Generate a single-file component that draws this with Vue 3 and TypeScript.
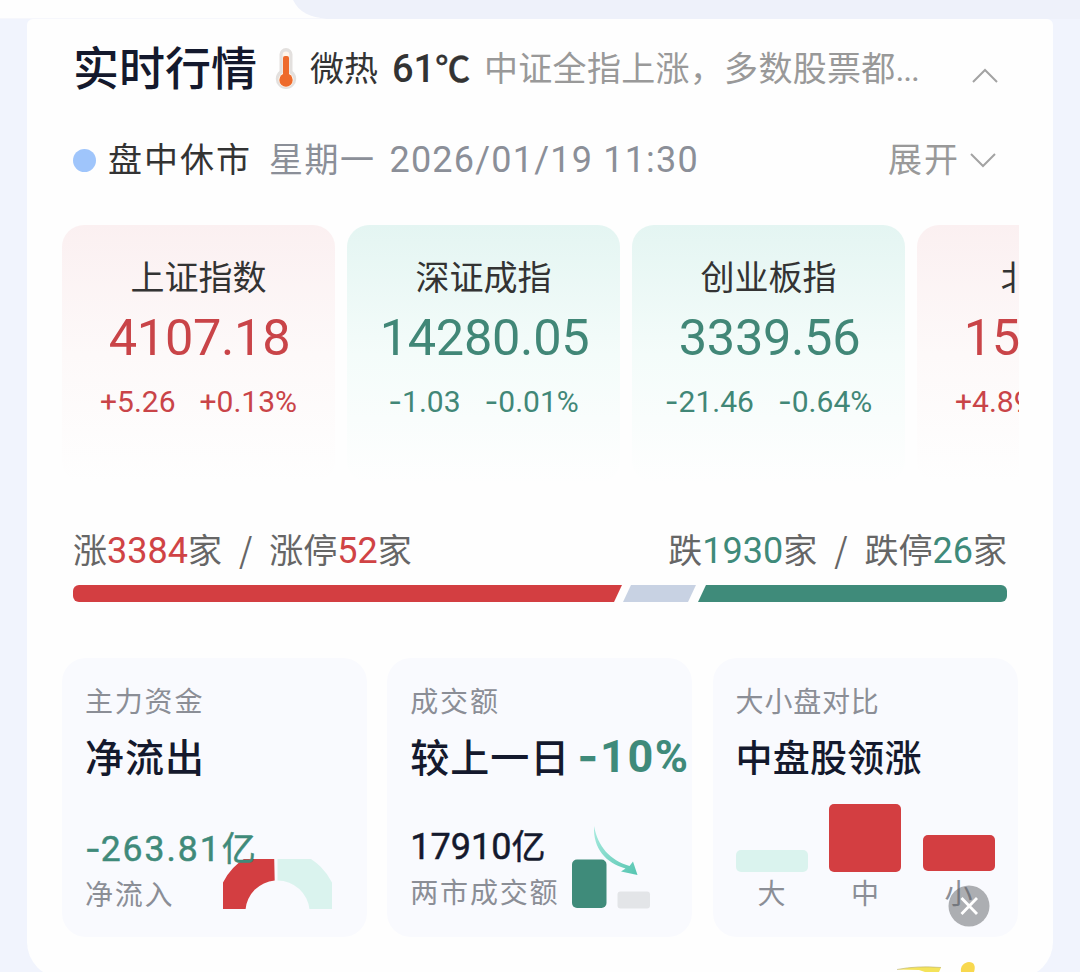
<script setup lang="ts">
type Trend = 'up' | 'down'

interface MarketIndex {
  name: string
  value: string
  sign: string
  change: string
  percent: string
  trend: Trend
}

const indices: MarketIndex[] = [
  { name: '上证指数', value: '4107.18', sign: '+', change: '5.26', percent: '0.13%', trend: 'up' },
  { name: '深证成指', value: '14280.05', sign: '-', change: '1.03', percent: '0.01%', trend: 'down' },
  { name: '创业板指', value: '3339.56', sign: '-', change: '21.46', percent: '0.64%', trend: 'down' },
  { name: '北证50', value: '1534.26', sign: '+', change: '4.89', percent: '0.32%', trend: 'up' },
]

const caps = [
  { label: '大', height: 22, lift: 0, tone: 'pale' },
  { label: '中', height: 68, lift: 0, tone: 'red' },
  { label: '小', height: 36, lift: 1, tone: 'red' },
]
</script>

<template>
  <div class="page">
    <svg class="tabs" width="1080" height="19" viewBox="0 0 1080 19">
      <rect width="1080" height="19" fill="#eef1fa" />
      <path d="M0 0H293C299 12 310 18 327 18.5H0Z" fill="#fefefe" />
    </svg>

    <main class="panel">
      <header class="headline">
        <h1>实时行情</h1>
        <svg class="thermo" width="22" height="44" viewBox="0 0 22 44">
          <path d="M4.500 7.500a6.500 6.500 0 0 1 13 0V24a10.200 10.200 0 1 1-13 0Z" fill="#e3e0de" />
          <path d="M7.600 8a3.400 3.400 0 0 1 6.800 0V26a7.500 7.500 0 1 1-6.800 0Z" fill="#fff5ea" />
          <circle cx="11" cy="33" r="6.700" fill="#ee6a2b" />
          <rect x="8" y="9" width="6" height="24" rx="2" fill="#ee6a2b" />
        </svg>
        <span class="mood">微热</span>
        <span class="temp"><span class="num">61</span>℃</span>
        <span class="summary">中证全指上涨，多数股票都<span class="dots">...</span></span>
        <svg class="chev" width="26" height="16" viewBox="0 0 26 16"><path d="M1 14 13 2 25 14" /></svg>
      </header>

      <div class="session">
        <i class="dot"></i>
        <span class="status">盘中休市</span>
        <span class="date">星期一</span>
        <span class="date stamp"><span class="num">2026/01/19 11:30</span></span>
        <span class="expand">展开</span>
        <svg class="chev" width="26" height="16" viewBox="0 0 26 16"><path d="M1 2 13 14 25 2" /></svg>
      </div>

      <section class="indices">
        <article v-for="item in indices" :key="item.name" class="index" :class="item.trend">
          <div class="name">{{ item.name }}</div>
          <div class="value">{{ item.value }}</div>
          <div class="change">
            <span><span class="sign">{{ item.sign }}</span>{{ item.change }}</span>
            <span><span class="sign">{{ item.sign }}</span>{{ item.percent }}</span>
          </div>
        </article>
      </section>

      <section class="breadth">
        <div class="counts">
          <div>涨<span class="num red">3384</span>家<span class="slash">/</span>涨停<span class="num red">52</span>家</div>
          <div>跌<span class="num green">1930</span>家<span class="slash">/</span>跌停<span class="num green">26</span>家</div>
        </div>
        <div class="ratio">
          <i class="rise"></i>
          <i class="flat"></i>
          <i class="fall"></i>
        </div>
      </section>

      <section class="metrics">
        <article class="metric">
          <div class="label">主力资金</div>
          <div class="title">净流出</div>
          <div class="flow">
            <div class="amount"><span class="sign">-</span><span class="num">263.81</span>亿</div>
            <div class="label">净流入</div>
          </div>
          <svg class="donut" width="109" height="50" viewBox="0 0 109 50">
            <path d="M-6.500 51A61 61 0 0 1 51 -10L51.700 21.500A32 32 0 0 0 22.500 51Z" fill="#d33e41" />
            <path d="M115.500 51A61 61 0 0 0 54.500 -10V21.500A32 32 0 0 1 86.500 51Z" fill="#daf3ee" />
          </svg>
        </article>

        <article class="metric">
          <div class="label">成交额</div>
          <div class="title">较上一日<span class="pct"><span class="sign">-</span>10%</span></div>
          <div class="turnover">
            <div>
              <div class="amount"><span class="num">17910</span>亿</div>
              <div class="label">两市成交额</div>
            </div>
            <svg width="80" height="84" viewBox="0 0 80 84">
              <defs>
                <linearGradient id="arrow" x1="0" y1="0" x2="1" y2="1">
                  <stop offset="0" stop-color="#a9ebdf" />
                  <stop offset="1" stop-color="#56c5b1" />
                </linearGradient>
              </defs>
              <rect x="0" y="34.500" width="34.500" height="48.500" rx="5" fill="#3f8b7a" />
              <rect x="45.500" y="66.500" width="32.500" height="17" rx="3" fill="#e3e5e8" />
              <path d="M22 1C26 22 38 35 57.500 41L61 36.500 65.500 50 49 46.500 53.500 43.500C34 38 21 24 22 1Z" fill="url(#arrow)" />
            </svg>
          </div>
        </article>

        <article class="metric">
          <div class="label tight">大小盘对比</div>
          <div class="title compact">中盘股领涨</div>
          <div class="caps">
            <div v-for="cap in caps" :key="cap.label" class="cap">
              <i :class="cap.tone" :style="{ height: cap.height + 'px', marginBottom: 4 + cap.lift + 'px' }"></i>
              <span>{{ cap.label }}</span>
            </div>
          </div>
        </article>
      </section>
    </main>

    <svg class="close" width="42" height="42" viewBox="0 0 42 42">
      <circle cx="21" cy="21" r="20.500" fill="#606166" fill-opacity=".5" />
      <path d="M13.500 13 29 29M29 13 13.500 29" stroke="#fff" stroke-width="2.800" />
    </svg>
    <svg class="promo" width="82" height="12" viewBox="0 0 82 12">
      <path d="M0 9.500Q20 5.500 44 7.500L42 12H28L22 10Z" fill="#f4e35a" />
      <path d="M0 9.500Q20 5.500 44 7.500" fill="none" stroke="#b9ae6a" stroke-width=".6" />
      <path d="M64 12C63 6 67 2.500 72 2C77 2 79 6 77 12Z" fill="#f8d84e" />
    </svg>
  </div>
</template>

<style>
body {
  background: #f1f4fd;
  overflow: hidden;
}
</style>

<style scoped>
.page {
  position: relative;
  width: 1080px;
  height: 972px;
  overflow: hidden;
  background: #f1f4fd;
  font-family: "Noto Sans CJK SC", "Noto Sans", sans-serif;
  color: #333;
}
.tabs {
  display: block;
}
.panel {
  box-sizing: border-box;
  width: 1026px;
  height: 959px;
  margin-left: 27px;
  padding: 17px 35px 0;
  border-radius: 6px 6px 36px 36px;
  background: #fefefe;
}
.num, .dots {
  font-family: Roboto, sans-serif;
  line-height: 0;
}
.sign {
  font-family: Inter, sans-serif;
  line-height: 0;
}
.red { color: #d04345; }
.green { color: #3f8a7a; }

.headline, .session {
  display: flex;
  align-items: center;
  white-space: nowrap;
  font-size: 34px;
}
.headline {
  height: 60px;
  padding-left: 11px;
}
h1 {
  margin: -2px 0 0;
  width: 184px;
  font-size: 46px;
  font-weight: 500;
  line-height: 60px;
  color: #14192d;
}
.thermo {
  margin: 6px 0 0 18px;
}
.mood, .temp, .summary {
  margin-top: 2px;
  line-height: 60px;
}
.mood {
  margin-left: 13px;
}
.temp {
  width: 92px;
  margin-left: 14px;
  font-size: 35px;
  font-weight: 500;
  -webkit-text-stroke: 0.400px #333;
}
.temp .num {
  font-size: 38px;
  -webkit-text-stroke: 0;
}
.summary {
  width: 440px;
  letter-spacing: 0.300px;
  color: #999;
}
.dots {
  letter-spacing: -1.300px;
}
.chev {
  fill: none;
  stroke: #a3a3a3;
  stroke-width: 2;
}
.headline .chev {
  margin: 19px 0 0 48px;
}
.session {
  height: 40px;
  margin-top: 42px;
  padding-left: 11px;
  line-height: 40px;
}
.dot {
  width: 23px;
  height: 23px;
  margin-top: 5px;
  border-radius: 50%;
  background: #9fc5fb;
}
.status {
  width: 161px;
  margin-left: 12px;
  letter-spacing: 2px;
}
.date {
  letter-spacing: 1.500px;
  color: #8b8f98;
}
.stamp {
  margin-left: 14px;
  letter-spacing: 1.200px;
}
.stamp .num {
  font-size: 36px;
}
.expand {
  margin-left: auto;
  letter-spacing: 2px;
  color: #999;
}
.session .chev {
  margin: 4px 22px 0 10px;
}

.indices {
  display: flex;
  gap: 12px;
  width: 957px;
  height: 258px;
  margin-top: 47px;
  overflow: hidden;
}
.index {
  box-sizing: border-box;
  flex: 0 0 273px;
  padding-top: 29px;
  border-radius: 22px;
  text-align: center;
  white-space: nowrap;
}
.index.up {
  color: #c94448;
  background: linear-gradient(#fbf0f1, #fdf9f9 50%, #fefefe);
}
.index.down {
  color: #418777;
  background: linear-gradient(#e4f5f2, #f4fcfa 50%, #fefefe);
}
.name {
  font-size: 34px;
  line-height: 44px;
  color: #333;
}
.value {
  margin-top: 10px;
  padding-left: 2px;
  font-family: Roboto, sans-serif;
  font-size: 50.500px;
  line-height: 60px;
  letter-spacing: -0.300px;
}
.change {
  display: flex;
  justify-content: center;
  gap: 24px;
  margin-top: 18px;
  font-family: Roboto, sans-serif;
  font-size: 30px;
  line-height: 32px;
}
.up .sign {
  font-family: Roboto, sans-serif;
}

.breadth {
  width: 934px;
  margin: 46px 0 0 11px;
}
.counts {
  display: flex;
  justify-content: space-between;
  height: 40px;
  font-size: 34px;
  line-height: 40px;
  white-space: nowrap;
  color: #666;
}
.counts .num {
  font-size: 36px;
}
.slash {
  margin: 0 17px;
}
.ratio {
  display: flex;
  height: 17px;
  margin-top: 16px;
}
.rise {
  width: 549px;
  border-radius: 6px 0 0 6px;
  background: #d33e41;
  clip-path: polygon(0 0, 100% 0, calc(100% - 8px) 100%, 0 100%);
}
.flat {
  width: 73px;
  margin-left: 1px;
  background: #c8d2e3;
  clip-path: polygon(8px 0, 100% 0, calc(100% - 8px) 100%, 0 100%);
}
.fall {
  flex: 1;
  margin-left: 2px;
  border-radius: 0 6px 6px 0;
  background: #3f8b7a;
  clip-path: polygon(8px 0, 100% 0, 100% 100%, 0 100%);
}

.metrics {
  display: grid;
  grid-template-columns: repeat(3, 305px);
  gap: 20.300px;
  margin-top: 56px;
}
.metric {
  position: relative;
  box-sizing: border-box;
  height: 279px;
  padding: 26px 0 0 23px;
  border-radius: 24px;
  background: #f9fafe;
  white-space: nowrap;
}
.label {
  font-size: 28px;
  line-height: 32px;
  letter-spacing: 1.800px;
  color: #8b8e96;
}
.label.tight {
  letter-spacing: 0.800px;
}
.title {
  height: 50px;
  margin-top: 14px;
  font-size: 39px;
  font-weight: 500;
  line-height: 50px;
  letter-spacing: 1px;
  color: #14192d;
}
.title.compact {
  padding-top: 1px;
  height: 49px;
  font-size: 37px;
  letter-spacing: 0.200px;
}
.pct {
  margin-left: 7px;
  font-family: Roboto, sans-serif;
  font-size: 45px;
  font-weight: 700;
  line-height: 0;
  letter-spacing: 1.600px;
  color: #3f8a7a;
}
.amount {
  font-size: 34px;
  line-height: 40px;
  color: #14192d;
  -webkit-text-stroke: 0.500px currentColor;
}
.amount .num {
  font-size: 36px;
}
.flow {
  position: relative;
  z-index: 1;
  margin-top: 47px;
}
.flow .amount {
  color: #3f8a7a;
}
.flow .num {
  font-size: 35.500px;
  letter-spacing: 2px;
}
.flow .label {
  margin-top: 10px;
}
.label {
  -webkit-text-stroke: 0;
}
.donut {
  position: absolute;
  left: 161px;
  top: 201px;
}
.turnover {
  display: flex;
  gap: 13px;
  margin-top: 45px;
}
.turnover .label {
  margin-top: 10px;
}
.caps {
  display: flex;
  gap: 21.500px;
  align-items: flex-end;
  height: 128px;
}
.cap {
  display: flex;
  flex-direction: column;
  align-items: center;
  width: 72px;
  font-size: 28px;
  line-height: 32px;
  color: #8b8e96;
}
.cap i {
  width: 72px;
  border-radius: 5px;
}
.cap .red { background: #d33e41; }
.cap .pale { background: #daf3ee; }

.close {
  position: absolute;
  left: 947.500px;
  top: 884.500px;
}
.promo {
  position: absolute;
  left: 897px;
  top: 960px;
}
</style>
